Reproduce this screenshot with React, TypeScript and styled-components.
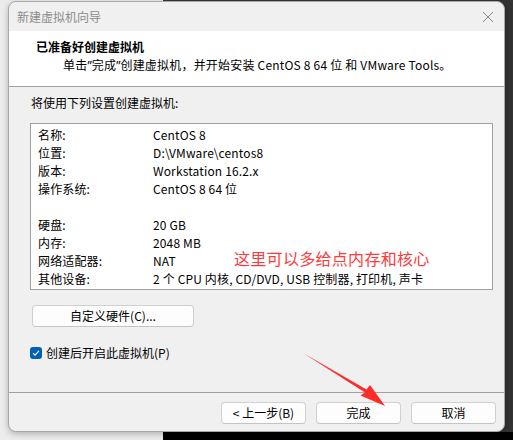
import styled, { createGlobalStyle } from 'styled-components';

const Global = createGlobalStyle`
  html, body { margin: 0; padding: 0; }
  body {
    width: 513px;
    height: 440px;
    overflow: hidden;
    font-family: "Noto Sans CJK SC", "Noto Sans", sans-serif;
    font-size: 12px;
    color: #000;
  }
`;

const Desktop = styled.div`
  width: 513px;
  height: 440px;
  box-sizing: border-box;
  padding: 1px 8px 8px 8px;
  background:
    linear-gradient(#ececec, #ececec) left top / 163px 100% no-repeat,
    linear-gradient(#000, #000) left bottom / 100% 8px no-repeat,
    #333;
`;

const Window = styled.div`
  position: relative;
  height: 431px;
  box-sizing: border-box;
  border: 1px solid #a8a8a8;
  border-radius: 8px;
  background: #f0f0f0;
  box-shadow: 0 2px 6px rgba(0, 0, 0, 0.25);
  overflow: hidden;
  display: flex;
  flex-direction: column;
`;

const TitleBar = styled.div`
  height: 29px;
  display: flex;
  align-items: center;
  justify-content: space-between;
  padding: 0 10px 0 8px;
  color: #8c8c8c;
  line-height: 1;
`;

const CloseButton = styled.div`
  width: 12px;
  height: 12px;
  display: flex;
  align-items: center;
  justify-content: center;
`;

const Header = styled.div`
  height: 56px;
  background: #fff;
  border-bottom: 1px solid #a0a0a0;
  display: flex;
  flex-direction: column;
  padding: 7px 0 0 27px;
  box-sizing: border-box;
`;

const HeaderTitle = styled.div`
  font-weight: bold;
  line-height: 17px;
`;

const HeaderText = styled.div`
  padding-left: 27px;
  line-height: 17px;
  margin-top: 1px;
  letter-spacing: 0.2px;
`;

const Quote = styled.span`
  font-family: "Noto Sans", sans-serif;
  letter-spacing: 0;
`;

const Body = styled.div`
  flex: 1;
  display: flex;
  flex-direction: column;
  padding: 8px 11px 0 21px;
`;

const Caption = styled.div`
  line-height: 16px;
  padding-left: 1px;
`;

const ListBox = styled.div`
  position: relative;
  margin-top: 12px;
  height: 167px;
  box-sizing: border-box;
  border: 1px solid #a0a0a0;
  background: #fff;
  padding: 2px 0 0 7px;
`;

const Row = styled.div`
  display: grid;
  grid-template-columns: 115px 1fr;
  height: 18px;
  line-height: 18px;
  white-space: nowrap;
  letter-spacing: 0.15px;
`;

const Note = styled.div`
  position: absolute;
  left: 203px;
  top: 124px;
  color: #ff3a3a;
  font-size: 16px;
  line-height: 20px;
  letter-spacing: 0.3px;
`;

const PushButton = styled.button<{ $width: number }>`
  width: ${(p) => p.$width}px;
  height: 22px;
  box-sizing: border-box;
  border: 1px solid #d0d0d0;
  border-bottom-color: #c4c4c4;
  border-radius: 4px;
  background: #fdfdfd;
  font-family: inherit;
  font-size: 12px;
  color: #000;
  padding: 0;
  line-height: 20px;
`;

const HardwareButton = styled(PushButton)`
  margin: 15px 0 0 2px;
`;

const CheckRow = styled.label`
  display: flex;
  align-items: center;
  gap: 4px;
  margin-top: 19px;
  line-height: 14px;
`;

const CheckBox = styled.span`
  width: 12px;
  height: 12px;
  border-radius: 3px;
  background: #005fb8;
  display: flex;
  align-items: center;
  justify-content: center;
`;

const Footer = styled.div`
  height: 39px;
  border-top: 1px solid #a0a0a0;
  display: flex;
  justify-content: flex-end;
  align-items: flex-start;
  gap: 10px;
  padding: 9px 8px 0 0;
  box-sizing: border-box;
`;

const Arrow = styled.svg`
  position: absolute;
  left: 290px;
  top: 348px;
  pointer-events: none;
`;

const rows: [string, string][] = [
  ['名称:', 'CentOS 8'],
  ['位置:', 'D:\\VMware\\centos8'],
  ['版本:', 'Workstation 16.2.x'],
  ['操作系统:', 'CentOS 8 64 位'],
  ['', ''],
  ['硬盘:', '20 GB'],
  ['内存:', '2048 MB'],
  ['网络适配器:', 'NAT'],
  ['其他设备:', '2 个 CPU 内核, CD/DVD, USB 控制器, 打印机, 声卡'],
];

export default function App() {
  return (
    <Desktop>
      <Global />
      <Window>
        <TitleBar>
          <span>新建虚拟机向导</span>
          <CloseButton>
            <svg width="12" height="12" viewBox="0 0 12 12">
              <path d="M1 1L11 11M11 1L1 11" stroke="#8a8a8a" strokeWidth="1" fill="none" />
            </svg>
          </CloseButton>
        </TitleBar>
        <Header>
          <HeaderTitle>已准备好创建虚拟机</HeaderTitle>
          <HeaderText>
            单击<Quote>”</Quote>完成<Quote>”</Quote>创建虚拟机，并开始安装 CentOS 8 64 位 和 VMware Tools。
          </HeaderText>
        </Header>
        <Body>
          <Caption>将使用下列设置创建虚拟机:</Caption>
          <ListBox>
            {rows.map(([k, v], i) => (
              <Row key={i}>
                <span>{k}</span>
                <span>{v}</span>
              </Row>
            ))}
            <Note>这里可以多给点内存和核心</Note>
          </ListBox>
          <HardwareButton $width={162}>自定义硬件(C)...</HardwareButton>
          <CheckRow>
            <CheckBox>
              <svg width="8" height="8" viewBox="0 0 8 8">
                <path d="M1 4.2L3 6.2L7 1.8" stroke="#fff" strokeWidth="1.1" fill="none" />
              </svg>
            </CheckBox>
            <span>创建后开启此虚拟机(P)</span>
          </CheckRow>
        </Body>
        <Footer>
          <PushButton $width={85}>&lt; 上一步(B)</PushButton>
          <PushButton $width={85}>完成</PushButton>
          <PushButton $width={85}>取消</PushButton>
        </Footer>
        <Arrow width="95" height="62" viewBox="0 0 95 62">
          <path d="M4 3L66 42.5L61.5 45.5L86 56L71 35L67.5 39.5Z" fill="#ff2b2b" />
        </Arrow>
      </Window>
    </Desktop>
  );
}
